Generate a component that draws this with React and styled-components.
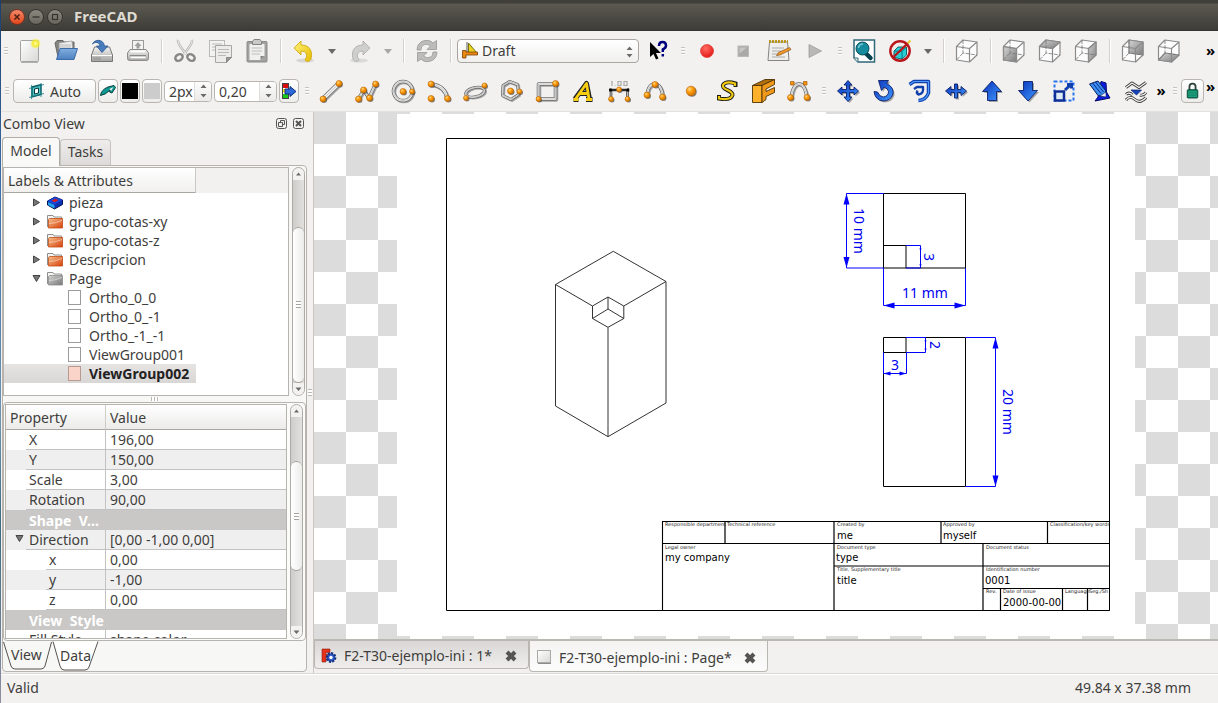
import React from "react";
import styled, { createGlobalStyle } from "styled-components";

const GlobalStyle = createGlobalStyle`
  * { box-sizing: border-box; }
  body {
    margin: 0;
    font: 14px/19px "Noto Sans", "Open Sans", sans-serif;
    color: #3f3e3c;
    background: #f2f1f0;
  }
  button, input, select { font: inherit; color: inherit; }
  button { padding: 0; border: 0; background: none; }
`;

/* ---------- shell ---------- */

const Window = styled.div`
  display: flex;
  flex-direction: column;
  height: 100vh;
  min-height: 600px;
  overflow: hidden;
  position: relative;
  &::before {
    content: "";
    position: absolute;
    inset: 0 auto 0 0;
    width: 1px;
    z-index: 2;
    background: linear-gradient(#1c3f6e, #3f75b0 30%, #6f93ad 60%, #3a6b80 75%, #8f8fa0);
  }
`;

const TitleBar = styled.header`
  flex: none;
  display: flex;
  align-items: center;
  gap: 3px;
  height: 31px;
  padding: 3px 9px 0;
  background: linear-gradient(#403f3a 3px, #5b5950 4px, #3d3c38);
  border-bottom: 1px solid #35342f;
  color: #dfdbd2;
`;

const WindowTitle = styled.h1`
  margin: 0 0 0 8px;
  font-size: 15px;
  line-height: 19px;
  font-weight: 700;
`;

const WindowButton = styled.button`
  display: flex;
  align-items: center;
  justify-content: center;
  width: 16px;
  height: 16px;
  border-radius: 8px;
  border: 1px solid ${(p) => (p.$close ? "#7e3320" : "#34332e")};
  background: ${(p) =>
    p.$close ? "linear-gradient(#f4896a, #e0471b)" : "linear-gradient(#8b897f, #67655d)"};
`;

const Toolbar = styled.div`
  flex: none;
  display: flex;
  align-items: center;
  height: 40px;
  overflow: hidden;
`;

const ToolGroup = styled.div`
  display: flex;
  align-items: center;
  flex: none;
`;

const Handle = styled.span`
  flex: none;
  width: ${(p) => p.$w || 13}px;
  height: 9px;
  background: repeating-linear-gradient(#c6c4c1 0 1px, #fbfbfa 1px 2px, transparent 2px 3px) center / 4px 9px no-repeat;
`;

const Separator = styled.span`
  flex: none;
  width: 11px;
  height: 24px;
  background: linear-gradient(90deg, #d3d0cc 1px, #fff 1px) center / 2px 24px no-repeat;
`;

const ToolButton = styled.button`
  flex: none;
  display: flex;
  align-items: center;
  justify-content: center;
  width: 36px;
  height: 36px;
  svg { display: block; overflow: visible; }
`;

const DropArrow = styled.button`
  flex: none;
  width: 20px;
  height: 36px;
  display: flex;
  align-items: center;
  justify-content: center;
  &::after {
    content: "";
    border: 4px solid transparent;
    border-top: 5px solid ${(p) => (p.$dim ? "#a8a7a5" : "#6a6967")};
    border-bottom: 0;
  }
`;

const More = styled.button`
  flex: none;
  width: ${(p) => (p.$end ? 12 : 14)}px;
  height: ${(p) => (p.$high ? 32 : 40)}px;
  align-self: flex-start;
  margin-left: ${(p) => (p.$end ? "auto" : "0")};
  padding-bottom: 2px;
  color: #000;
  font-weight: 700;
  font-size: 15px;
  line-height: 20px;
  text-align: ${(p) => (p.$end ? "left" : "center")};
`;

const RaisedButton = styled.button`
  flex: none;
  display: flex;
  align-items: center;
  justify-content: center;
  gap: 6px;
  width: ${(p) => p.$w || 20}px;
  height: 24px;
  margin-right: 2px;
  border: 1px solid #b9b5b0;
  border-radius: 4px;
  background: linear-gradient(#fff, #ececeb);
`;

const Swatch = styled.span`
  width: 16px;
  height: 16px;
  background: ${(p) => p.$color};
`;

const ComboWrap = styled.label`
  position: relative;
  flex: none;
  width: 182px;
  height: 24px;
  margin: 0 1px;
  > svg { position: absolute; left: 5px; top: 3px; pointer-events: none; }
  > svg:last-child { left: auto; right: 5px; top: 7px; }
`;

const Combo = styled.select`
  appearance: none;
  width: 100%;
  height: 24px;
  padding: 0 20px 2px 24px;
  border: 1px solid #aaa6a1;
  border-radius: 4px;
  background: linear-gradient(#fff, #f0efee);
`;

const Spin = styled.label`
  flex: none;
  display: flex;
  width: ${(p) => p.$w}px;
  height: 21px;
  margin-right: 2px;
  border: 1px solid #b9b5b0;
  border-radius: 4px;
  background: #fff;
  overflow: hidden;
`;

const SpinInput = styled.input`
  flex: 1;
  min-width: 0;
  width: 10px;
  padding: 0 0 0 4px;
  border: 0;
  background: none;
`;

const SpinButtons = styled.span`
  flex: none;
  display: flex;
  align-items: center;
  justify-content: center;
  width: 17px;
  background: linear-gradient(#fcfcfc, #ebeae9);
  border-left: 1px solid #e0dedb;
`;

const Body = styled.main`
  flex: 1;
  min-height: 0;
  display: flex;
  border-top: 1px solid #e4e2df;
`;

const StatusBar = styled.footer`
  flex: none;
  display: flex;
  justify-content: space-between;
  align-items: center;
  height: 30px;
  padding: 0 27px 2px 7px;
  border-top: 1px solid #dcdad7;
  box-shadow: inset 0 1px #fff;
`;

/* ---------- dock ---------- */

const Dock = styled.aside`
  flex: none;
  width: 307px;
  display: flex;
  flex-direction: column;
  padding-left: 2px;
`;

const DockTitle = styled.div`
  flex: none;
  display: flex;
  align-items: center;
  gap: 6px;
  height: 23px;
  padding: 0 3px 0 1px;
  span { flex: 1; }
`;

const DockButton = styled.button`
  width: 11px;
  height: 11px;
  svg { display: block; }
`;

const TabRow = styled.div`
  flex: none;
  display: flex;
  align-items: flex-end;
  height: 30px;
`;

const DockTab = styled.button`
  width: ${(p) => p.$w}px;
  height: ${(p) => (p.$active ? 29 : 26)}px;
  margin-bottom: ${(p) => (p.$active ? -1 : 0)}px;
  padding-bottom: ${(p) => (p.$active ? 4 : 2)}px;
  z-index: ${(p) => (p.$active ? 1 : 0)};
  border: 1px solid ${(p) => (p.$active ? "#b0aca6" : "#c6c3be")};
  border-bottom: 0;
  border-radius: 4px 4px 0 0;
  background: ${(p) => (p.$active ? "#f9f9f8" : "linear-gradient(#eeedec, #dddbd9)")};
`;

const Pane = styled.div`
  flex: 1;
  min-height: 0;
  display: flex;
  flex-direction: column;
  border: 1px solid #b7b3ae;
  border-radius: 0 4px 4px 4px;
  background: #f7f7f6;
  padding: 1px 0 0;
  margin-bottom: 1px;
`;

const TreeRow = styled.div`
  flex: 0 0 229px;
  display: flex;
  gap: 3px;
  padding-right: 1px;
`;

const Tree = styled.div`
  flex: 1;
  border: 1px solid #b7b3ae;
  background: #fff;
`;

const TreeHeader = styled.div`
  height: 25px;
  background: #f2f1f0;
  div {
    width: 192px;
    height: 25px;
    padding: 3px 4px;
    border-right: 1px solid #cbc8c4;
    border-bottom: 1px solid #aaa6a1;
    background: linear-gradient(#fff, #f1f0ef);
  }
`;

const TreeList = styled.ul`
  margin: 0;
  padding: 0;
  list-style: none;
`;

const TreeItem = styled.li`
  display: flex;
  align-items: center;
  width: 192px;
  height: 19px;
  padding-left: ${(p) => (p.$child ? 64 : 28)}px;
  gap: ${(p) => (p.$child ? 8 : 6)}px;
  font-weight: ${(p) => (p.$selected ? 700 : 400)};
  color: ${(p) => (p.$selected ? "#22211f" : "inherit")};
  background: ${(p) => (p.$selected ? "linear-gradient(#e6e4e3, #d9d7d5)" : "none")};
  svg { flex: none; }
`;

const Leaf = styled.span`
  width: 13px;
  height: 15px;
  border: 1px solid ${(p) => (p.$fill ? "#b99a92" : "#9b9b9b")};
  background: ${(p) => p.$fill || "#fff"};
`;

const ScrollTrack = styled.div`
  flex: none;
  display: flex;
  flex-direction: column;
  width: 13px;
  border: 1px solid #aeaaa5;
  border-radius: 7px;
  background: linear-gradient(90deg, #cfcdca, #e2e0de);
  overflow: hidden;
`;

const ScrollStep = styled.button`
  flex: none;
  display: flex;
  align-items: center;
  justify-content: center;
  height: 12px;
  background: #f3f2f1;
  svg { display: block; }
`;

const ScrollSpace = styled.div`
  flex: ${(p) => p.$flex} 1 0;
  border-radius: 6px;
`;

const ScrollThumb = styled.div`
  flex: ${(p) => p.$flex} 1 0;
  border: 1px solid #a5a19b;
  border-width: 1px 0;
  border-radius: 6px;
  background:
    repeating-linear-gradient(#a5a29f 0 1px, #fff 1px 3px) center / 5px 7px no-repeat,
    linear-gradient(90deg, #fff, #ececeb);
`;

const Splitter = styled.div`
  flex: none;
  height: 6px;
  background: repeating-linear-gradient(90deg, #bab7b3 0 1px, #fff 1px 3px) center / 8px 4px no-repeat;
`;

const PropertyFrame = styled.div`
  flex: 1;
  min-height: 0;
  display: flex;
  gap: 3px;
  padding: 1px 2px 1px 1px;
  border: 1px solid #b7b3ae;
  border-radius: 4px;
  background: #fbfbfa;
`;

const PropertyBox = styled.div`
  flex: 1;
  overflow: hidden;
  border: 1px solid #b7b3ae;
  background: #fff;
`;

const PropertyTable = styled.table`
  width: 100%;
  table-layout: fixed;
  border-collapse: separate;
  border-spacing: 0;
  th, td { padding: 0; text-align: left; font-weight: 400; white-space: nowrap; }
  th:first-child { width: 99px; }
  thead th {
    height: 25px;
    padding: 1px 4px;
    border-bottom: 1px solid #aaa6a1;
    background: linear-gradient(#fff, #ecebea);
  }
  thead th + th { border-left: 1px solid #cfccc8; }
`;

const PropertyRow = styled.tr`
  background: ${(p) => (p.$shade ? "#efefef" : "#fff")};
  td {
    height: 20px;
    padding-left: 4px;
    border-left: 1px solid #c2c2c2;
    border-bottom: 1px solid #c2c2c2;
  }
`;

const PropertyName = styled.div`
  position: relative;
  height: 20px;
  margin-left: ${(p) => p.$indent}px;
  padding-left: 3px;
  border-bottom: 1px solid #c2c2c2;
  svg { position: absolute; left: -11px; top: 4px; }
`;

const SectionRow = styled.tr`
  background: #c9c8c6;
  color: #fff;
  th { height: 20px; padding-left: 23px; }
  th span { display: block; white-space: pre; font-weight: 700; }
`;

const SheetTabs = styled.div`
  flex: none;
  display: flex;
  height: 30px;
`;

const SheetTab = styled.button`
  width: ${(p) => p.$w}px;
  height: 30px;
  display: block;
  svg { display: block; }
`;

/* ---------- document area ---------- */

const Grip = styled.div`
  flex: none;
  width: 7px;
  background: repeating-linear-gradient(#bab7b3 0 1px, #fff 1px 3px) center / 4px 7px no-repeat;
  border-right: 1px solid #c9c6c2;
`;

const Documents = styled.section`
  flex: 1;
  min-width: 0;
  display: flex;
  flex-direction: column;
`;

const Canvas = styled.div`
  flex: 1;
  min-height: 0;
  display: flex;
  align-items: center;
  justify-content: center;
  padding-bottom: 1px;
  overflow: hidden;
  background: repeating-conic-gradient(#fff 0 25%, #dcdcdc 0 50%) 0 0 / 64px 64px;
  svg { flex: none; display: block; background: #fff; }
`;

const DocTabs = styled.div`
  flex: none;
  display: flex;
  align-items: flex-start;
  height: 34px;
  border-top: 2px solid #bbb8b4;
`;

const DocTab = styled.div`
  display: flex;
  align-items: center;
  gap: 7px;
  width: ${(p) => (p.$active ? 239 : 215)}px;
  height: ${(p) => (p.$active ? 31 : 28)}px;
  padding: 2px 12px 0 6px;
  border: 1px solid #bab7b2;
  border-top: 0;
  border-radius: 0 0 4px 4px;
  background: ${(p) => (p.$active ? "linear-gradient(#f4f3f2, #fcfcfc)" : "linear-gradient(#d9d7d5, #efeeed)")};
  svg { display: block; flex: none; }
`;

const DocName = styled.button`
  flex: 1;
  text-align: left;
  white-space: nowrap;
`;

/* ---------- icons ---------- */

const Defs = () => (
  <svg width="0" height="0" style={{ position: "absolute" }} aria-hidden="true">
    <defs>
      <radialGradient id="ball" cx=".35" cy=".3" r=".8">
        <stop offset="0" stopColor="#ffd98a" /><stop offset=".4" stopColor="#ff9c0a" /><stop offset="1" stopColor="#c86a00" />
      </radialGradient>
      <radialGradient id="red" cx=".4" cy=".3" r=".8">
        <stop offset="0" stopColor="#ff6a60" /><stop offset="1" stopColor="#e01010" />
      </radialGradient>
      <radialGradient id="glow"><stop offset="0" stopColor="#fffcb0" /><stop offset=".5" stopColor="#f5ec2c" /><stop offset="1" stopColor="#f5ec2c" stopOpacity="0" /></radialGradient>
      <linearGradient id="paper" x1="0" y1="0" x2="1" y2="1"><stop offset="0" stopColor="#fff" /><stop offset="1" stopColor="#d8d8d6" /></linearGradient>
      <linearGradient id="blue" x1="0" y1="0" x2="1" y2="1"><stop offset="0" stopColor="#0a2fb8" /><stop offset="1" stopColor="#3f9bff" /></linearGradient>
      <linearGradient id="folder" x1="0" y1="0" x2="0" y2="1"><stop offset="0" stopColor="#82aede" /><stop offset="1" stopColor="#4d80c0" /></linearGradient>
      <linearGradient id="metal" x1="0" y1="0" x2="0" y2="1"><stop offset="0" stopColor="#f4f4f3" /><stop offset="1" stopColor="#a4a4a2" /></linearGradient>
      <linearGradient id="orange" x1="0" y1="0" x2="1" y2="1"><stop offset="0" stopColor="#f6c08c" /><stop offset="1" stopColor="#d8400a" /></linearGradient>
      <linearGradient id="grayf" x1="0" y1="0" x2="1" y2="1"><stop offset="0" stopColor="#d2d2d2" /><stop offset="1" stopColor="#777" /></linearGradient>
      <linearGradient id="yellow" x1="0" y1="0" x2="1" y2="1"><stop offset="0" stopColor="#fff17a" /><stop offset="1" stopColor="#e8bd00" /></linearGradient>
      <linearGradient id="face" x1="0" y1="0" x2="1" y2="1"><stop offset="0" stopColor="#d4d4d4" /><stop offset="1" stopColor="#7c7c7c" /></linearGradient>
    </defs>
  </svg>
);

const Ball = ({ x, y, r = 3 }) => (
  <g>
    <circle cx={x + 1} cy={y + 1} r={r} fill="#444" opacity=".65" />
    <circle cx={x} cy={y} r={r} fill="url(#ball)" stroke="#b66400" strokeWidth=".6" />
  </g>
);

const Pipe = ({ d, w = 4 }) => (
  <g fill="none" strokeLinejoin="round">
    <path d={d} stroke="#555" opacity=".5" strokeWidth={w} transform="translate(1 1)" />
    <path d={d} stroke="#6d6d6d" strokeWidth={w} />
    <path d={d} stroke="#f2f2f2" strokeWidth={w - 1.6} />
    <path d={d} stroke="#9b9b9b" strokeWidth=".5" />
  </g>
);

const Cube = ({ face }) => (
  <g fill="none" stroke="#8b8b8b" strokeWidth="1.200" strokeLinejoin="round">
    <path d="M1.500 7.500L8 1L22 3V16L14.500 23L1.500 21Z" fill="#fcfcfc" />
    {face && <path d={face} fill="url(#face)" />}
    <path d="M1.500 7.500L14.500 9.500L22 3M14.500 9.500V23" />
    <path d="M8 1V14L22 16M8 14L1.500 21" strokeWidth=".8" strokeDasharray="4 1.200" stroke="#777" />
  </g>
);

const shadow = { fill: "#333", opacity: 0.4, transform: "translate(1.500 1.500)" };
const BlueShape = ({ d }) => (
  <g>
    <path d={d} {...shadow} />
    <path d={d} fill="url(#blue)" stroke="#0b1f6b" strokeWidth=".9" strokeLinejoin="round" />
  </g>
);

const UNDO = "M2 9L9 2V6C17 6 21 11 19 20C17.500 23 14 23 13 21C16 17 15 12 9 12V16Z";

const icons = {
  New: (
    <g><rect x="2.500" y="1.500" width="18" height="21" rx="1" fill="url(#paper)" stroke="#a3a3a1" /><path d="M3 23.500H20" stroke="#888" opacity=".6" /><circle cx="17.500" cy="4.500" r="5.500" fill="url(#glow)" /></g>
  ),
  Open: (
    <g><path d="M1 4L3 1.500H9L10 3H20V18H4Z" fill="#858582" stroke="#666" /><path d="M5 4L18 2L19 14H5Z" fill="#eee" stroke="#999" strokeWidth=".7" /><path d="M5 6H17M5 8H17" stroke="#aaa" strokeWidth=".8" /><path d="M6 9.500H23.500L20 20.500H2.500Z" fill="url(#folder)" stroke="#3c6caa" /></g>
  ),
  Save: (
    <g><path d="M4.500 8H19.500L22.500 16V22.500H1.500V16Z" fill="url(#metal)" stroke="#777" /><path d="M2 16.500H22" stroke="#fff" /><path d="M4 18V21M6 18V21M8 18V21M10 18V21" stroke="#888" strokeWidth=".8" /><path d="M2.500 5C4 .5 13 -1 14.500 7H18L12 13.500L6.500 7H10C9.500 3 5 2.500 2.500 5Z" fill="#4a7dbd" stroke="#2b5590" strokeWidth=".8" /></g>
  ),
  Print: (
    <g><rect x="6.500" y="1.500" width="11" height="11" fill="#f3f3f2" stroke="#9a9a98" /><path d="M12 3L15.500 7H13.500V9.500H10.500V7H8.500Z" fill="#a0a09e" /><path d="M4 10.500H20L22.500 14V19.500Q22.500 21.500 20.500 21.500H3.500Q1.500 21.500 1.500 19.500V14Z" fill="url(#metal)" stroke="#8b8b89" /><path d="M5 12.500H19M4.500 18.500H19.500" stroke="#fff" strokeWidth="1.500" /><path d="M4 16.500H20" stroke="#888" /></g>
  ),
  Cut: (
    <g fill="none"><path d="M5 1Q4 4 13 15M19 1Q20 4 11 15" stroke="#b5b5b3" strokeWidth="2.600" /><path d="M5 1Q4 4 13 15M19 1Q20 4 11 15" stroke="#e9e9e8" strokeWidth="1" /><ellipse cx="6" cy="18.500" rx="4" ry="3" transform="rotate(-35 6 18.500)" stroke="#868684" strokeWidth="2.400" /><ellipse cx="18" cy="18.500" rx="4" ry="3" transform="rotate(35 18 18.500)" stroke="#868684" strokeWidth="2.400" /></g>
  ),
  Copy: (
    <g stroke="#b9b9b7"><rect x=".5" y="1.500" width="15" height="16" fill="#f3f3f2" /><path d="M3 5H13M3 8H13M3 11H13" /><path d="M6.500 6.500H22.500V18L17.500 23.500H6.500Z" fill="#ecebea" stroke="#a6a6a4" /><path d="M9 10.500H20M9 13.500H20M9 16.500H17" /><path d="M17.500 23.500V18.500H22.500Z" fill="#999" stroke="#888" /></g>
  ),
  Paste: (
    <g><rect x="2" y="2.500" width="20" height="20.500" rx="1" fill="#a2a2a0" stroke="#8a8a88" /><path d="M4.500 5H19.500V17L15.500 21H4.500Z" fill="#f0f0ef" /><path d="M6.500 9H17M6.500 12H17M6.500 15H15" stroke="#bcbcba" /><path d="M15.500 21V17H19.500Z" fill="#888" /><path d="M7.500 2.500L9 .5H15L16.500 2.500V5.500H7.500Z" fill="#c9c9c7" stroke="#828280" /></g>
  ),
  Undo: (
    <g><ellipse cx="13" cy="21.500" rx="9" ry="2" fill="#999" opacity=".3" /><path d={UNDO} fill="url(#yellow)" stroke="#cfaa10" strokeWidth=".9" strokeLinejoin="round" /></g>
  ),
  Redo: (
    <g transform="matrix(-1 0 0 1 24 0)"><ellipse cx="13" cy="21.500" rx="9" ry="2" fill="#999" opacity=".25" /><path d={UNDO} fill="#cfcfcd" stroke="#aeaeac" strokeWidth=".9" strokeLinejoin="round" /></g>
  ),
  Refresh: (
    <g fill="#bcbcba" stroke="#989896" strokeWidth=".8" strokeLinejoin="round"><path d="M2 11C2 1 14 -1 18 4L21.500 1.500V10.500H12L15.500 7C12 4 6 5 6 11Z" /><path d="M22 13C22 23 10 25 6 20L2.500 22.500V13.500H12L8.500 17C12 20 18 19 18 13Z" /></g>
  ),
  WhatsThis: (
    <g><path d="M4 3V18L7.500 15L10 20.500L12.500 19.500L10 14H15Z" fill="#000" /><path d="M13 7Q13 3 16.500 3Q20 3 20 6.500Q20 9 16.800 10.500V13M16.800 15V17.500" fill="none" stroke="#00007e" strokeWidth="2.500" /></g>
  ),
  Record: <circle cx="12" cy="12" r="6.500" fill="url(#red)" stroke="#e23a32" strokeWidth=".7" />,
  Stop: <g><rect x="7" y="7" width="10.500" height="10.500" fill="#aaa9a7" stroke="#bbb9b7" /><path d="M8.500 14.500V8.500H16Z" fill="#c6c5c3" /></g>,
  Note: (
    <g><path d="M2.500 3H20.500L22 21.500H1Z" fill="#eeeeec" stroke="#858583" /><path d="M2 2.500H21" stroke="#b8971c" strokeWidth="3" strokeDasharray="2 1" /><path d="M5 9H17M5 12H14M5 15H14M5 18H18" stroke="#aaa" /><path d="M22.500 8.500L24 10.500L13 16L9.500 16.500L11.500 13.500Z" fill="#f39b2d" stroke="#8a4d10" strokeWidth=".7" /></g>
  ),
  Play: <path d="M6 5.500L18.500 12L6 18.500Z" fill="#b9b8b6" stroke="#9e9d9b" strokeWidth=".8" />,
  Fit: (
    <g><path d="M2 1H22.500V23H6L2 19Z" fill="#fff" stroke="#2f6877" strokeWidth="1.500" /><path d="M2 19H6V23" fill="#dcecef" stroke="#2f6877" /><path d="M13.500 14L18.500 19" stroke="#06414f" strokeWidth="4.500" strokeLinecap="round" /><circle cx="10.500" cy="9.500" r="6.500" fill="#158b9d" stroke="#0a4c5b" strokeWidth="1" /><path d="M6.500 9Q7 5 11 5" fill="none" stroke="#76cad4" strokeWidth="1.500" /></g>
  ),
  NoDraw: (
    <g><circle cx="12" cy="12" r="9" fill="#f2e9e8" /><path d="M6 12L10 8L18.500 8V16L14 20L6 18.500Z" fill="#28cfd5" stroke="#076b75" /><path d="M6 12L14 12.500L18.500 8M14 12.500V20" fill="none" stroke="#087581" /><path d="M16 8L22.500 1.500" stroke="#e7c92c" strokeWidth="2" /><circle cx="12" cy="12" r="9.700" fill="none" stroke="#b8161b" strokeWidth="2.400" /><path d="M5.500 18L18.500 5.500" stroke="#b8161b" strokeWidth="2.400" /></g>
  ),
  CubeIso: <Cube />,
  CubeFront: <Cube face="M1.500 7.500L14.500 9.500V23L1.500 21Z" />,
  CubeTop: <Cube face="M1.500 7.500L8 1L22 3L14.500 9.500Z" />,
  CubeRight: <Cube face="M14.500 9.500L22 3V16L14.500 23Z" />,
  CubeRear: <Cube face="M8 1L22 3V16L8 14Z" />,
  CubeBottom: <Cube face="M1.500 21L8 14L22 16L14.500 23Z" />,
  Line: <g><Pipe d="M4 20L20 4.500" w={5} /><Ball x={4} y={20} /><Ball x={20} y={4.500} /></g>,
  Wire: <g><Pipe d="M3.500 20L8.500 11L14 19L20.500 5" w={3.500} /><Ball x={3.500} y={20} /><Ball x={8.500} y={11} /><Ball x={14.500} y={19} /><Ball x={20.500} y={5} /></g>,
  Circle: <g><Pipe d="M12 2.500A9.500 9.500 0 1 1 11.990 2.500Z" w={3.500} /><Ball x={12} y={12.500} /><Ball x={21} y={12.500} r={2.500} /></g>,
  Arc: <g><Pipe d="M4 5Q18 7 20 19" w={4} /><Ball x={4} y={5} /><Ball x={4} y={19.500} /><Ball x={20.500} y={19.500} /></g>,
  Ellipse: <g><g transform="rotate(-12 12 13)"><Pipe d="M12 8.500A9.500 4.700 0 1 1 11.990 8.500Z" w={3} /></g><Ball x={3} y={19} r={2.500} /><Ball x={21.500} y={6.500} r={2.500} /></g>,
  Polygon: <g><Pipe d="M10.500 2.500L18.500 5.500L19.500 15.500L12 20.500L3.500 16.500L4 6.500Z" w={3} /><Ball x={11.500} y={12} /><Ball x={20.500} y={12.500} r={2.500} /></g>,
  Rect: <g><Pipe d="M3.500 5H20.500V20H3.500Z" w={3.500} /><Ball x={3.500} y={20} r={2.500} /><Ball x={20.500} y={4.500} /></g>,
  Text: (
    <g fill="none" strokeLinejoin="round"><g stroke="#222" strokeWidth="5"><path d="M4 20L15.500 4.500L18.500 20M9 14.500H17M2.500 20.500H7.500M15 20.500H21.500" /></g><g stroke="#f7ce12" strokeWidth="2.800"><path d="M4.500 20L15.500 4.500L18 20M9 14.500H17M2.500 20.500H7.500M15 20.500H21" /></g></g>
  ),
  Dimension: (
    <g><path d="M4 2.500H5V7M8.500 6.500V7M11 2.500H14V6.500H11ZM17 2.500H20V6.500H17Z" fill="none" stroke="#a9a9a9" strokeWidth="1.200" /><path d="M4 20V11H20.500V20" fill="none" stroke="#444" strokeWidth="2.600" /><path d="M4 19V12M20.500 12V19" stroke="#ddd" strokeWidth=".8" /><path d="M2 11H22" stroke="#222" strokeWidth="1.500" /><path d="M3.500 9.500V12.500M21 9.500V12.500" stroke="#000" strokeWidth="2.500" /><Ball x={12} y={10.500} r={2.500} /><Ball x={4} y={20} r={2.500} /><Ball x={20.500} y={20} r={2.500} /></g>
  ),
  BSpline: <g><Pipe d="M4 17Q5 5 12 5Q19 6 20 19" w={3.500} /><Ball x={12} y={5.500} /><Ball x={4} y={16} /><Ball x={19.500} y={18} /></g>,
  Point: <Ball x={12} y={12} r={4.800} />,
  ShapeString: (
    <g fill="none"><path d="M20.500 8V4.500Q11 1.500 8 6C6 11 18 11 17.500 16Q16 21.500 4 19.500V16" stroke="#1d1b12" strokeWidth="4" /><path d="M20 7V4.500Q11 1.500 8 6C6 11 18 11 17.500 16Q16 21.500 4 19.500V17" stroke="#edc813" strokeWidth="2.200" /></g>
  ),
  Facebinder: (
    <g stroke="#4e3205" strokeLinejoin="round" strokeWidth=".9"><path d="M1.500 6.500L14 .5H23.500L11 6.500Z" fill="#b06f0c" /><path d="M1.500 6.500H11V23.500H1.500Z" fill="#ffb02a" /><path d="M11 6.500L23.500 .5V5.500L15 10V12.500L23.500 8.500V13.500L15 17.500V20.500L11 23.500Z" fill="#f0981a" /></g>
  ),
  Bezier: <g><path d="M5 4H19" stroke="#bbb" /><Pipe d="M4 19Q6 5 12 5Q18 5 20 19" w={3.500} /><path d="M3.500 2.500h3.500v3.500h-3.500ZM16.500 2.500h3.500v3.500h-3.500Z" fill="#f59412" stroke="#a85b00" strokeWidth=".7" /><Ball x={3.500} y={18.500} /><Ball x={20} y={18.500} /></g>,
  Move: <BlueShape d="M12 1.500L16 6H13.500V10.500H18V8L22.500 12L18 16V13.500H13.500V18H16L12 22.500L8 18H10.500V13.500H6V16L1.500 12L6 8V10.500H10.500V6H8Z" />,
  Rotate: <BlueShape d="M6.500 1.500H16.500L14.500 4.500Q22 8 21 15Q18.500 22 11 22Q3 21 2 12.500L5.500 13Q7.500 18 11.500 18Q16.500 17 16.500 12.500Q16 9.500 12 8L9.500 11.500Z" />,
  Offset: <g fill="none" stroke="#123fae" strokeLinejoin="round"><path d="M1.500 5.500L6 2.500H20.500V14Q18 21 10.500 21.500" strokeWidth="3.500" /><path d="M1.500 5.500L6 2.500H20.500V14Q18 21 10.500 21.500" strokeWidth="1.200" stroke="#4b9cff" /><path d="M6 10L9 8H15Q16 15 10.500 15.500Q8 14 9.500 11.500" strokeWidth="2.400" /></g>,
  Trimex: <BlueShape d="M1.500 12L7 7.500V10.500H10.500V5H13.500V10.500H17V7.500L22.500 12L17 16.500V13.500H13.500V19H10.500V13.500H7V16.500Z" />,
  Upgrade: <BlueShape d="M12 2L21.500 12.500H16.500V21.500H7.500V12.500H2.500Z" />,
  Downgrade: <BlueShape d="M12 22L21.500 11.500H16.500V2.500H7.500V11.500H2.500Z" />,
  Scale: (
    <g fill="none"><rect x="2.500" y="2.500" width="19" height="19" stroke="#2b73ee" strokeWidth="2" strokeDasharray="3 2" /><rect x="3" y="12.500" width="9" height="9" fill="#dfe8f5" stroke="#102f96" strokeWidth="2.500" /><path d="M13 11L19.500 5M15 5.500H19.500V9.500" stroke="#123fae" strokeWidth="3" /></g>
  ),
  Edit: (
    <g strokeLinejoin="round"><path d="M13 2.500L18 4L18.500 13L22 19L7 22L10 18Z" fill="#0b1ce0" stroke="#020a6a" /><path d="M1.500 5L10 2L17.500 11.500V17.500L10 16.500Z" fill="#3a8ff0" stroke="#0d1f60" /><path d="M4.500 4L13 14.500M7.500 3L15.500 13" stroke="#0a2b8c" /><path d="M12 17L18 13V18Z" fill="#eef3fb" stroke="#0d1f60" strokeWidth=".6" /></g>
  ),
  Draft2Sketch: (
    <g fill="none" strokeLinejoin="round"><g stroke="#3a3a3a" strokeWidth="3"><path d="M2 8.500L8 4L15 8.500L22 3.500" /><path d="M2 21Q6 16 11 20.500T22 18.500" /><path d="M2 15.500Q5 12.500 8.500 16M16 16Q19 17 22 13.500" /></g><g stroke="#f4f4f4" strokeWidth="1.200"><path d="M2 8.500L8 4L15 8.500L22 3.500" /><path d="M2 21Q6 16 11 20.500T22 18.500" /><path d="M2 15.500Q5 12.500 8.500 16M16 16Q19 17 22 13.500" /></g><path d="M7 11H17.500L12.500 16Z" fill="#1746ba" stroke="#0b1f6b" strokeWidth=".7" /></g>
  ),
  Lock: (
    <g><path d="M8.500 11V7Q8.500 3.500 12 3.500T15.500 7V11" fill="none" stroke="#2b3f3b" strokeWidth="2" /><rect x="6" y="10.500" width="12" height="9.500" rx="1" fill="#0d8868" stroke="#06412f" /><path d="M7 13H17M7 15.500H17M7 18H17" stroke="#35b08d" strokeWidth=".8" /></g>
  ),
};

const Icon = ({ name, size = 24 }) => (
  <svg width={size} height={size} viewBox="0 0 24 24" aria-hidden="true">{icons[name]}</svg>
);

const Tool = ({ name }) => (
  <ToolButton type="button" aria-label={name}><Icon name={name} /></ToolButton>
);

const Tools = ({ names }) => names.map((n) => <Tool key={n} name={n} />);

const UpDown = ({ gap = 10 }) => (
  <svg width="9" height={gap + 4} aria-hidden="true">
    <path d={`M1.500 4L4.500 0.500L7.500 4ZM1.500 ${gap}L4.500 ${gap + 3.5}L7.500 ${gap}Z`} fill="#6b6a68" />
  </svg>
);

const Expander = ({ open }) => (
  <svg width="9" height="9" viewBox="0 0 9 9" aria-hidden="true">
    <path d={open ? "M1 1.500H8L4.500 7.500Z" : "M1.500 1V8L7.500 4.500Z"} fill="#777" stroke="#444" />
  </svg>
);

const Folder = ({ gray }) => (
  <svg width="16" height="15" viewBox="0 0 16 15" aria-hidden="true">
    <path d="M.5 13V1.500H6L7 3H14.500V5" fill="#f5f5f4" stroke="#8e8e8c" />
    <path d="M2.500 4.500H15.500V14H1.500V5.500Z" fill={gray ? "url(#grayf)" : "url(#orange)"} stroke={gray ? "#8a8a8a" : "#c14b14"} strokeWidth=".8" />
    <path d="M2 9.500Q8 9.500 15 6.500" stroke="#fff" opacity=".45" fill="none" />
  </svg>
);

const PartIcon = () => (
  <svg width="16" height="14" viewBox="0 0 16 14" aria-hidden="true">
    <path d="M.5 5L8 1L15.500 4V8.500L7.500 13L.5 9Z" fill="#0a2fb0" stroke="#031552" />
    <path d="M.5 5L8 1L15.500 4L7.500 8.500Z" fill="#1747d8" />
    <path d="M1 6L7.500 9V12.500L1 9Z" fill="#22a0e8" />
    <path d="M4.500 4.700L8.500 2.700L11.500 4.200L7.500 6.300Z" fill="#d91b1b" />
  </svg>
);

const StepArrow = ({ up }) => (
  <svg width="7" height="4" aria-hidden="true">
    <path d={up ? "M1 3.500L3.500 .5L6 3.500Z" : "M.5 .5L3.500 4L6.500 .5Z"} fill="#6b6a68" />
  </svg>
);

const Scrollbar = ({ before, thumb, after }) => (
  <ScrollTrack>
    <ScrollStep type="button" aria-label="Scroll up"><StepArrow up /></ScrollStep>
    <ScrollSpace $flex={before} />
    <ScrollThumb $flex={thumb} />
    {after > 0 && <ScrollSpace $flex={after} />}
    <ScrollStep type="button" aria-label="Scroll down"><StepArrow /></ScrollStep>
  </ScrollTrack>
);

const CloseCross = () => (
  <svg width="12" height="12" viewBox="0 0 12 12" aria-hidden="true">
    <path d="M2 2L10 10M10 2L2 10" stroke="#555452" strokeWidth="4" />
  </svg>
);

/* ---------- data ---------- */

const treeItems = [
  { label: "pieza", icon: <PartIcon /> },
  { label: "grupo-cotas-xy", icon: <Folder /> },
  { label: "grupo-cotas-z", icon: <Folder /> },
  { label: "Descripcion", icon: <Folder /> },
  { label: "Page", icon: <Folder gray />, open: true },
  { label: "Ortho_0_0", child: true },
  { label: "Ortho_0_-1", child: true },
  { label: "Ortho_-1_-1", child: true },
  { label: "ViewGroup001", child: true },
  { label: "ViewGroup002", child: true, selected: true },
];

const properties = [
  { name: "X", value: "196,00" },
  { name: "Y", value: "150,00", shade: true },
  { name: "Scale", value: "3,00" },
  { name: "Rotation", value: "90,00", shade: true },
  { section: "Shape  V..." },
  { name: "Direction", value: "[0,00 -1,00 0,00]", shade: true, open: true },
  { name: "x", value: "0,00", indent: 40 },
  { name: "y", value: "-1,00", indent: 40, shade: true },
  { name: "z", value: "0,00", indent: 40 },
  { section: "View  Style" },
  { name: "Fill Style", value: "shape color" },
];

/* ---------- drawing sheet ---------- */

const SheetLabel = styled.text`
  font: 5px "DejaVu Sans", sans-serif;
  fill: #222;
`;
const SheetValue = styled.text`
  font: 10px "DejaVu Sans", sans-serif;
  fill: #000;
`;
const DimText = styled.text`
  font: 14px "Noto Sans", sans-serif;
  fill: #0000f0;
  text-anchor: middle;
`;

const Arrow = ({ x, y, dir, l = 11, w = 3 }) => {
  const pts = {
    up: `${x},${y} ${x - w},${y + l} ${x + w},${y + l}`,
    down: `${x},${y} ${x - w},${y - l} ${x + w},${y - l}`,
    left: `${x},${y} ${x + l},${y - w} ${x + l},${y + w}`,
    right: `${x},${y} ${x - l},${y - w} ${x - l},${y + w}`,
  };
  return <polygon points={pts[dir]} fill="#00f" />;
};

const sheetLabels = [
  [665, 526, "Responsible department"], [727, 526, "Technical reference"], [837, 526, "Created by"],
  [943, 526, "Approved by"], [1050, 526, "Classification/key words"], [665, 549, "Legal owner"],
  [837, 549, "Document type"], [986, 549, "Document status"], [837, 571, "Title, Supplementary title"],
  [986, 571, "Identification number"], [986, 593, "Rev."], [1003, 593, "Date of issue"],
  [1065, 593, "Language"], [1089, 593, "Seg./Sh"],
];
const sheetValues = [
  [837, 539, "me"], [943, 539, "myself"], [665, 561, "my company"], [836, 561, "type"],
  [837, 584, "title"], [985, 584, "0001"], [1003, 606, "2000-00-00"],
];

const Sheet = () => (
  <svg width="738" height="522" viewBox="397 114 738 522" role="img" aria-label="Drawing page">
    <g fill="none" stroke="#000">
      <path d="M446.500 138.500H1109.500V610.500H446.500Z" />
      <path d="M662.500 521.500H1109.500M662.500 543.500H1109.500M834 566H1109.500M983 588.500H1109.500M662.500 521V610.500H1109.500" strokeWidth="1.100" />
      <path d="M725 521V543.500M834 521V610.500M941 521V543.500M1047.500 521V543.500M983 543.500V610.500M1000.500 588V610.500M1062.500 588V610.500M1087.500 588V610.500" strokeWidth="1.200" />
      <path d="M613.300 251.300L555.500 284.500V406L608 436.700L666 403V281.500ZM555.500 284.500L592.500 306V318.500L608 327.300L623.800 318.500V306L666 281.500M592.500 306L608 297L623.800 306M608 297V309L592.500 318.500M608 309L623.800 318.500M608 327.300V436.700" stroke="#333" />
      <path d="M883.500 193.500H965.500V268H883.500ZM883.500 245.500H906V268M883.500 337.500H965.500V486.500H883.500ZM883.500 352.500H906V337.500" />
    </g>
    <g fill="none" stroke="#00f">
      <path d="M846.500 193.500H883.500M846.500 268H883.500M846.500 193.500V268M906 245.500H920.500V268H906M883.500 268V305.500H965.500V268" />
      <path d="M965.500 337.500H995.500V486.500H965.500M906 337.500H925.500V352.500H906M883.500 352.500V373.500H906.500V352.500" />
    </g>
    <Arrow x={846.5} y={193.5} dir="up" /><Arrow x={846.5} y={268} dir="down" />
    <Arrow x={883.5} y={305.5} dir="left" /><Arrow x={965.5} y={305.5} dir="right" />
    <Arrow x={995.5} y={337.5} dir="up" /><Arrow x={995.5} y={486.5} dir="down" />
    <Arrow x={883.5} y={373.5} dir="left" l={7} w={2} /><Arrow x={906.5} y={373.5} dir="right" l={7} w={2} />
    <Arrow x={920.5} y={245.5} dir="up" l={4} w={1} /><Arrow x={920.5} y={268} dir="down" l={4} w={1} />
    <Arrow x={925.5} y={337.5} dir="up" l={4} w={1} /><Arrow x={925.5} y={352.5} dir="down" l={4} w={1} />
    <DimText transform="translate(854 231) rotate(90)">10 mm</DimText>
    <DimText transform="translate(924 257) rotate(90)">3</DimText>
    <DimText x="925" y="298">11 mm</DimText>
    <DimText transform="translate(930 345) rotate(90)">2</DimText>
    <DimText x="895" y="370">3</DimText>
    <DimText transform="translate(1003 412) rotate(90)">20 mm</DimText>
    {sheetLabels.map(([x, y, t]) => <SheetLabel key={t} x={x} y={y}>{t}</SheetLabel>)}
    {sheetValues.map(([x, y, t]) => <SheetValue key={t} x={x} y={y}>{t}</SheetValue>)}
  </svg>
);

/* ---------- page ---------- */

const WindowControls = () => (
  <>
    <WindowButton type="button" $close aria-label="Close window">
      <svg width="8" height="8"><path d="M1.500 1.500L6.500 6.500M6.500 1.500L1.500 6.500" stroke="#4d2013" strokeWidth="1.500" /></svg>
    </WindowButton>
    <WindowButton type="button" aria-label="Minimize">
      <svg width="8" height="8"><path d="M.5 4H7.500" stroke="#34332e" strokeWidth="1.300" /></svg>
    </WindowButton>
    <WindowButton type="button" aria-label="Maximize">
      <svg width="8" height="8"><rect x="1.500" y="1.500" width="5" height="5" fill="none" stroke="#34332e" strokeWidth="1.200" /></svg>
    </WindowButton>
  </>
);

const FileToolbar = () => (
  <Toolbar role="toolbar" aria-label="File and view">
    <ToolGroup>
      <Handle $w={12} />
      <Tools names={["New", "Open", "Save", "Print"]} />
      <Separator />
      <Tools names={["Cut", "Copy", "Paste"]} />
      <Separator />
      <Tool name="Undo" /><DropArrow type="button" aria-label="Undo history" />
      <Tool name="Redo" /><DropArrow type="button" $dim aria-label="Redo history" />
      <Separator />
      <Tool name="Refresh" />
      <Separator />
      <ComboWrap>
        <Combo aria-label="Workbench" defaultValue="Draft"><option>Draft</option></Combo>
        <svg width="17" height="17" viewBox="0 0 17 17" aria-hidden="true">
          <path d="M6.500 11V1L14.500 10.500Z" fill="#e9d424" stroke="#77700f" />
          <path d="M5 0V12M15 13V11" stroke="#777" strokeWidth="1.200" />
          <path d="M.5 8.500H4V10H15.500V13H4V16H.5Z" fill="#e88712" stroke="#7c4202" strokeWidth=".8" />
        </svg>
        <UpDown gap={8} />
      </ComboWrap>
      <Tool name="WhatsThis" />
      <Handle />
      <Tools names={["Record", "Stop", "Note", "Play"]} />
      <Handle />
      <Tools names={["Fit", "NoDraw"]} /><DropArrow type="button" aria-label="Draw style" />
      <Separator />
      <Tool name="CubeIso" />
      <Separator />
      <Tools names={["CubeFront", "CubeTop", "CubeRight"]} />
      <Separator />
      <Tools names={["CubeRear", "CubeBottom"]} />
    </ToolGroup>
    <More type="button" $end aria-label="More">»</More>
  </Toolbar>
);

const DraftToolbar = () => (
  <Toolbar role="toolbar" aria-label="Draft">
    <ToolGroup>
      <Handle />
      <RaisedButton type="button" $w={83}>
        <svg width="16" height="16" viewBox="0 0 16 16" aria-hidden="true">
          <path d="M4 4L13 1.500V11.500L4 14Z" fill="#54c8c8" stroke="#075258" strokeWidth="1.300" />
          <path d="M6.500 6L10.500 5V10L6.500 11Z" fill="#fff" stroke="#08393d" />
          <path d="M1 5.500L16 1.500M1 14.500L16 10.500M3.500 2V16M13 0V14" stroke="#187f86" strokeWidth=".8" />
        </svg>
        Auto
      </RaisedButton>
      <RaisedButton type="button" aria-label="Construction mode">
        <svg width="16" height="14" viewBox="0 0 16 14" aria-hidden="true">
          <path d="M.5 11.500Q1 6 8 3L14 1.500L15.500 3.500L12 9L9.500 8L11 5.500L5 10Z" fill="#0e9a92" stroke="#07403d" />
          <path d="M9.500 5L13.500 3L11 7" fill="#eee" />
        </svg>
      </RaisedButton>
      <RaisedButton type="button" aria-label="Line color"><Swatch $color="#000" /></RaisedButton>
      <RaisedButton type="button" aria-label="Face color"><Swatch $color="#ccc" /></RaisedButton>
      <Spin $w={48}>
        <SpinInput aria-label="Line width" defaultValue="2px" />
        <SpinButtons><UpDown /></SpinButtons>
      </Spin>
      <Spin $w={63}>
        <SpinInput aria-label="Text size" defaultValue="0,20" />
        <SpinButtons><UpDown /></SpinButtons>
      </Spin>
      <RaisedButton type="button" aria-label="Apply style">
        <svg width="16" height="16" viewBox="0 0 16 16" aria-hidden="true">
          <rect x="1.500" y=".5" width="6" height="15" fill="#fff" stroke="#444" />
          <path d="M2 1H7V5H2Z" fill="#d90f0f" /><path d="M2 6H7V9.500H2Z" fill="#f5e116" /><path d="M2 11H7V15H2Z" fill="#19c819" />
          <path d="M4 6H9V3.500L15 8.500L9 13.500V11H4Z" fill="#2c69d9" stroke="#0c2f7d" />
        </svg>
      </RaisedButton>
      <Handle $w={12} />
      <Tools names={["Line", "Wire", "Circle", "Arc", "Ellipse", "Polygon", "Rect", "Text", "Dimension", "BSpline", "Point", "ShapeString", "Facebinder", "Bezier"]} />
      <Handle />
      <Tools names={["Move", "Rotate", "Offset", "Trimex", "Upgrade", "Downgrade", "Scale", "Edit", "Draft2Sketch"]} />
      <More type="button" aria-label="More modification tools">»</More>
      <Handle />
      <RaisedButton type="button" $w={23} aria-label="Snap lock"><Icon name="Lock" size={22} /></RaisedButton>
    </ToolGroup>
    <More type="button" $end $high aria-label="More">»</More>
  </Toolbar>
);

const ComboView = () => (
  <Dock>
    <DockTitle>
      <span>Combo View</span>
      <DockButton type="button" aria-label="Float">
        <svg width="11" height="11" fill="none" stroke="#555"><rect x=".5" y=".5" width="10" height="10" rx="2" /><path d="M4.500 4.500V2.500H8.500V6.500H6.500M2.500 4.500H6.500V8.500H2.500Z" /></svg>
      </DockButton>
      <DockButton type="button" aria-label="Close panel">
        <svg width="11" height="11" fill="none" stroke="#555"><rect x=".5" y=".5" width="10" height="10" rx="2" /><path d="M3 3L8 8M8 3L3 8" strokeWidth="2" /></svg>
      </DockButton>
    </DockTitle>
    <TabRow>
      <DockTab type="button" $active $w={58}>Model</DockTab>
      <DockTab type="button" $w={51}>Tasks</DockTab>
    </TabRow>
    <Pane>
      <TreeRow>
        <Tree>
          <TreeHeader><div>Labels &amp; Attributes</div></TreeHeader>
          <TreeList>
            {treeItems.map((t) => (
              <TreeItem key={t.label} $child={t.child} $selected={t.selected}>
                {t.child ? <Leaf $fill={t.selected && "#fad4c8"} /> : <><Expander open={t.open} />{t.icon}</>}
                {t.label}
              </TreeItem>
            ))}
          </TreeList>
        </Tree>
        <Scrollbar before={47} thumb={156} after={0} />
      </TreeRow>
      <Splitter />
      <PropertyFrame>
        <PropertyBox>
          <PropertyTable>
            <thead><tr><th>Property</th><th>Value</th></tr></thead>
            <tbody>
              {properties.map((p) =>
                p.section ? (
                  <SectionRow key={p.section}><th colSpan="2"><span>{p.section}</span></th></SectionRow>
                ) : (
                  <PropertyRow key={p.name} $shade={p.shade}>
                    <th scope="row">
                      <PropertyName $indent={p.indent || 20}>{p.open && <Expander open />}{p.name}</PropertyName>
                    </th>
                    <td>{p.value}</td>
                  </PropertyRow>
                )
              )}
            </tbody>
          </PropertyTable>
        </PropertyBox>
        <Scrollbar before={45} thumb={110} after={56} />
      </PropertyFrame>
      <SheetTabs>
        <SheetTab type="button" $w={49} aria-label="View">
          <svg width="49" height="30"><path d="M.5 1L8 25Q9 28 12 28H38Q41 28 42 25L48.500 1" fill="#f7f7f6" stroke="#55534f" /><text x="8" y="19" fill="#3f3e3c" fontSize="14">View</text></svg>
        </SheetTab>
        <SheetTab type="button" $w={48} aria-label="Data">
          <svg width="48" height="30"><path d="M1 .5L8 25Q9 29 12 29H33Q36 29 37 26L46 .5" fill="#fff" stroke="#55534f" /><text x="8" y="20" fill="#3f3e3c" fontSize="14">Data</text></svg>
        </SheetTab>
      </SheetTabs>
    </Pane>
  </Dock>
);

export default function App() {
  return (
    <Window>
      <GlobalStyle />
      <Defs />
      <TitleBar><WindowControls /><WindowTitle>FreeCAD</WindowTitle></TitleBar>
      <FileToolbar />
      <DraftToolbar />
      <Body>
        <ComboView />
        <Grip />
        <Documents>
          <Canvas><Sheet /></Canvas>
          <DocTabs>
            <DocTab>
              <svg width="16" height="16" viewBox="0 0 16 16" aria-hidden="true">
                <path d="M1 1H9V4.500H5V6.500H8V9.500H5V14H1Z" fill="#e5321b" stroke="#8f1708" strokeWidth=".6" />
                <circle cx="10" cy="9.500" r="4.300" fill="#2c56c4" stroke="#16307c" strokeWidth="2.200" strokeDasharray="2 1.300" />
                <circle cx="10" cy="9.500" r="1.700" fill="#fff" />
              </svg>
              <DocName type="button">F2-T30-ejemplo-ini : 1*</DocName>
              <DockButton type="button" aria-label="Close document"><CloseCross /></DockButton>
            </DocTab>
            <DocTab $active>
              <svg width="16" height="16" viewBox="0 0 16 16" aria-hidden="true">
                <rect x="1.500" y="1.500" width="13" height="12" fill="url(#paper)" stroke="#aaa9a7" /><path d="M2 14.500H15" stroke="#8d8c8a" />
              </svg>
              <DocName type="button">F2-T30-ejemplo-ini : Page*</DocName>
              <DockButton type="button" aria-label="Close page"><CloseCross /></DockButton>
            </DocTab>
          </DocTabs>
        </Documents>
      </Body>
      <StatusBar><span>Valid</span><span>49.84 x 37.38 mm</span></StatusBar>
    </Window>
  );
}
